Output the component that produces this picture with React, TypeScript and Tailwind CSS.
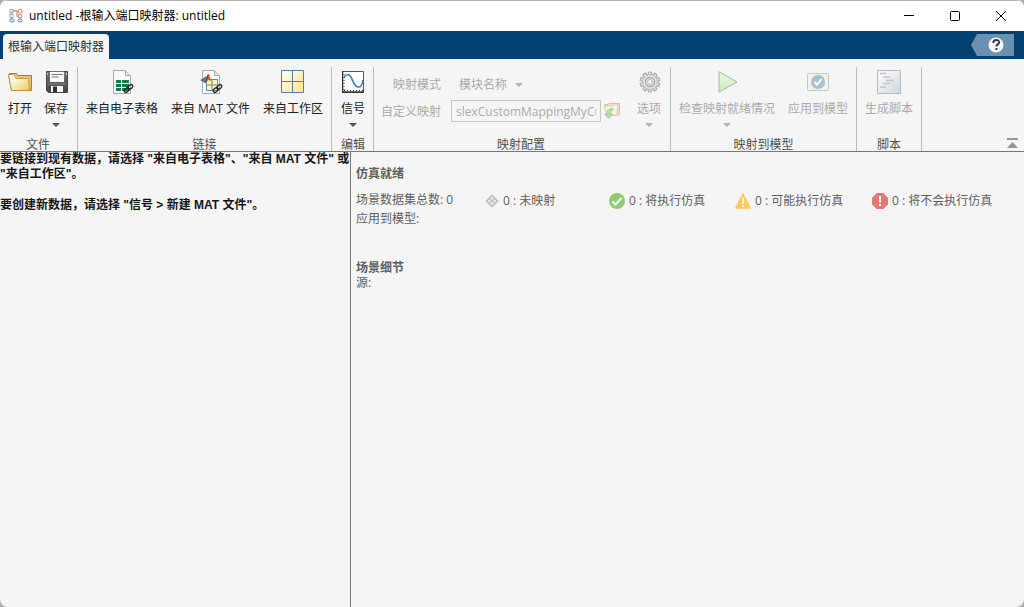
import React from "react";

type Kids = { children?: React.ReactNode };

function Arrow({ className = "" }: { className?: string }) {
  return (
    <svg viewBox="0 0 8 4" className={`h-1 w-2 shrink-0 ${className}`} aria-hidden="true">
      <path d="M0 0h8L4 4z" fill="currentColor" />
    </svg>
  );
}

function Section({ title, className = "", children }: Kids & { title: string; className?: string }) {
  return (
    <section className={`flex shrink-0 flex-col border-r border-[#bcbcbc] ${className}`}>
      <div className="flex flex-1">{children}</div>
      <h2 className="h-[15px] text-center leading-[18px] text-[#505050]">{title}</h2>
    </section>
  );
}

type ToolProps = { label: string; width: string; icon: React.ReactNode; menu?: boolean; disabled?: boolean };

function Tool({ label, width, icon, menu, disabled }: ToolProps) {
  return (
    <button
      type="button"
      disabled={disabled}
      className={`flex shrink-0 flex-col items-center whitespace-nowrap ${width} ${disabled ? "text-[#aaaaaa]" : "text-[#202020]"}`}
    >
      <span className="mt-[3px] flex h-6 items-center justify-center">{icon}</span>
      <span className="mt-[7px] leading-4">{label}</span>
      {menu && <Arrow className={`mt-1.5 ${disabled ? "text-[#b4b4b4]" : "text-[#555555]"}`} />}
    </button>
  );
}

function AppIcon() {
  return (
    <svg viewBox="0 0 14 14" className="h-3.5 w-3.5" fill="none" aria-hidden="true">
      <path d="M4 2h4v5h3v4M2.500 4v6" stroke="#e08a70" strokeWidth="1.300" />
      <g fill="#ffffff" strokeWidth="1">
        <rect x="1" y=".5" width="3" height="3" stroke="#a3a9ae" />
        <rect x="9.500" y=".5" width="3.500" height="3.500" rx="1" stroke="#db7b60" />
        <rect x="1" y="5.500" width="3" height="3" stroke="#a3a9ae" />
        <rect x="9.500" y="5.500" width="3" height="3" stroke="#a3a9ae" />
        <rect x=".7" y="10" width="4.500" height="3" rx="1.500" fill="#c9e1f2" stroke="#5a98c6" />
        <rect x="8.800" y="10" width="4.500" height="3" rx="1.500" fill="#c9e1f2" stroke="#5a98c6" />
      </g>
    </svg>
  );
}

function FolderIcon() {
  return (
    <svg viewBox="0 0 24 24" className="h-6 w-6" aria-hidden="true">
      <defs>
        <linearGradient id="folder" x1="0" y1="0" x2="1" y2="1">
          <stop offset=".2" stopColor="#fffef0" />
          <stop offset="1" stopColor="#eec95e" />
        </linearGradient>
      </defs>
      <path d="M.5 4.500l1-1h7l1.500 2h13.500v15h-20z" fill="#e5c675" stroke="#a57b31" />
      <path d="M.5 4.500h5l2.500 4h12.500l1 12H3.500z" fill="url(#folder)" stroke="#b78b3a" strokeWidth=".8" />
    </svg>
  );
}

function SaveIcon() {
  return (
    <svg viewBox="0 0 22 22" className="ml-0.5 h-[22px] w-[22px]" aria-hidden="true">
      <defs>
        <linearGradient id="disk" x2="0" y2="1">
          <stop stopColor="#777777" />
          <stop offset="1" stopColor="#444444" />
        </linearGradient>
      </defs>
      <path d="M.5.5h21v21h-19l-2-2z" fill="url(#disk)" stroke="#454545" />
      <path d="M4 .8h14V11H4z" fill="#f8f8f8" />
      <path d="M5.500 3.500h11M5.500 6h7" stroke="#777777" />
      <path d="M2.500 13h17" stroke="#858585" />
      <path d="M5 15h12v6H5z" fill="#f5f5f5" />
      <path d="M7 15.500h4V21H7z" fill="#333333" />
      <path d="M1.500 2v2M20.500 2v2" stroke="#cccccc" />
    </svg>
  );
}

function Page() {
  return (
    <>
      <path d="M2.500.5h12l5 5v18h-17z" fill="#f7f9fb" stroke="#a4adb4" />
      <path d="M14.500.5v5h5" fill="#dce2e7" stroke="#a4adb4" />
    </>
  );
}

function Chain() {
  return (
    <g transform="translate(17.500 18.500) rotate(-40)" fill="none" stroke="#272727" strokeWidth="1.400">
      <rect x="-5" y="-1.700" width="5.500" height="3.400" rx="1.700" />
      <rect x="-.5" y="-1.700" width="5.500" height="3.400" rx="1.700" />
    </g>
  );
}

function SheetIcon() {
  return (
    <svg viewBox="0 0 24 24" className="ml-0.5 h-6 w-6" aria-hidden="true">
      <Page />
      <path d="M5 10h13v11H5z" fill="#137c47" />
      <path d="M5 13.500h13M5 17.500h13M10.500 10v11" stroke="#ffffff" />
      <Chain />
    </svg>
  );
}

function MatIcon() {
  return (
    <svg viewBox="0 0 24 24" className="ml-0.5 h-6 w-6" aria-hidden="true">
      <Page />
      <path d="M6.500 9.500h11v11h-11zM6.500 15h11M12 9.500v11" fill="#fff2b2" stroke="#5d8aaf" />
      <path d="M0 10l3-1.500 3-2.500 2 3-3 4-2-1z" fill="#3b83ab" />
      <path d="M5 11l2.500-6.500L9 4l2 7-3-1-2.500 4z" fill="#d65c29" />
      <path d="M8 5l-1.500 5.500-2 1.500" stroke="#873321" fill="none" />
      <Chain />
    </svg>
  );
}

function WorkspaceIcon() {
  return (
    <svg viewBox="0 0 24 24" className="h-6 w-6" aria-hidden="true">
      <defs>
        <linearGradient id="cells" x2="1" y2="1">
          <stop stopColor="#fffef5" />
          <stop offset="1" stopColor="#ffe68c" />
        </linearGradient>
      </defs>
      <path d="M.5.5h22v22H.5z" fill="url(#cells)" />
      <path d="M.5.5h22v22H.5zM.5 11.500h22M11.500.5v22" fill="none" stroke="#537e9d" />
    </svg>
  );
}

function SignalIcon() {
  return (
    <svg viewBox="0 0 22 22" className="h-[22px] w-[22px]" aria-hidden="true">
      <path d="M.5.5h21v21H.5z" fill="#ffffff" stroke="#555555" />
      <path d="M.5 0v22M0 21h22" stroke="#303030" strokeWidth="1.500" />
      <path d="M2 19.500h19" stroke="#303030" strokeDasharray="1 2" />
      <path d="M2 3v17" stroke="#303030" strokeDasharray="1 2" />
      <path d="M1.500 7C4 3 7 2 9.500 7s3 9 7 9c3 0 4-3 4.500-7" fill="none" stroke="#2876bd" strokeWidth="1.500" />
    </svg>
  );
}

function BrowseIcon() {
  return (
    <svg viewBox="0 0 16 16" className="h-4 w-4" aria-hidden="true">
      <path d="M.5 1.500h3.500l1-1h10.500v11.500H3z" fill="#ece0c0" stroke="#d3c3a0" />
      <path d="M.5 3h9l1.500-1.500h3L12.500 12H3.500z" fill="#f8f2e0" stroke="#d8caa8" strokeWidth=".7" />
      <path d="M9 7C7 7 6.500 8.500 6.500 11H9L4.500 15.500.5 11H3c0-4 2-5.500 6-5.500z" fill="#b6dcaf" stroke="#8fc48a" strokeWidth=".7" />
    </svg>
  );
}

function GearIcon() {
  const teeth = [0, 36, 72, 108, 144, 180, 216, 252, 288, 324];
  return (
    <svg viewBox="0 0 22 22" className="ml-0.5 h-[22px] w-[22px]" fill="none" aria-hidden="true">
      {teeth.map((a) => (
        <path key={a} d="M9 4l.5-3h3l.5 3" transform={`rotate(${a} 11 11)`} fill="#dddddd" stroke="#a9a9a9" />
      ))}
      <circle cx="11" cy="11" r="7.500" fill="#e2e2e2" stroke="#bbbbbb" />
      <circle cx="11" cy="11" r="4.500" fill="#eeeeee" stroke="#a9a9a9" strokeWidth="1.500" />
      <circle cx="11" cy="11" r="2.500" fill="#f4f4f4" stroke="#b5b5b5" />
    </svg>
  );
}

function PlayIcon() {
  return (
    <svg viewBox="0 0 20 22" className="ml-0.5 h-[22px] w-5" aria-hidden="true">
      <defs>
        <linearGradient id="play" x2="0" y2="1">
          <stop stopColor="#f0f7e6" />
          <stop offset="1" stopColor="#cde8b7" />
        </linearGradient>
      </defs>
      <path d="M1 .8v20.400L19 11z" fill="url(#play)" stroke="#9bbd9b" strokeLinejoin="round" />
    </svg>
  );
}

function ApplyIcon() {
  return (
    <svg viewBox="0 0 22 18" className="h-[18px] w-[22px]" aria-hidden="true">
      <rect x=".5" y=".5" width="21" height="17" rx="1" fill="#f6f1e0" stroke="#b7c9d5" />
      <circle cx="11" cy="9" r="7" fill="#a9bfce" />
      <path d="M7.500 9l2.500 3 4.500-6" fill="none" stroke="#ffffff" strokeWidth="2" />
    </svg>
  );
}

function ScriptIcon() {
  return (
    <svg viewBox="0 0 24 24" className="h-6 w-6" aria-hidden="true">
      <defs>
        <linearGradient id="script" x2="1" y2="1">
          <stop offset=".2" stopColor="#f5f7f8" />
          <stop offset="1" stopColor="#ccd7df" />
        </linearGradient>
      </defs>
      <path d="M.5.5h23v23H.5z" fill="url(#script)" stroke="#b2bbc1" />
      <path d="M3 3.500h6M6 7h7M9 10.500h8M6 13.500h7M3 17h6" stroke="#c4c4c4" strokeWidth="1.300" />
    </svg>
  );
}

function Diamond() {
  return (
    <svg viewBox="0 0 14 14" className="h-3.5 w-3.5" aria-hidden="true">
      <path d="M7 .8L13.200 7 7 13.200.8 7z" fill="#c6c6c6" stroke="#bababa" strokeLinejoin="round" />
      <path d="M7 2.800l1.600 1.600L7 6 5.400 4.400zM7 8l1.600 1.600L7 11.200 5.400 9.600zM4.400 5.400L6 7 4.400 8.600 2.800 7zM9.600 5.400L11.200 7 9.600 8.600 8 7z" fill="#ededed" />
    </svg>
  );
}

function Check() {
  return (
    <svg viewBox="0 0 16 16" className="h-4 w-4" aria-hidden="true">
      <circle cx="8" cy="8" r="8" fill="#8fcd6f" />
      <path d="M3.500 8.500l3 3 6-6.500" stroke="#ffffff" strokeWidth="2" fill="none" />
    </svg>
  );
}

function Warning() {
  return (
    <svg viewBox="0 0 16 16" className="h-4 w-4" aria-hidden="true">
      <path d="M8 1l7.200 14H.8z" fill="#ffca58" stroke="#ffca58" strokeWidth="1.500" strokeLinejoin="round" />
      <path d="M7 5h2v6H7zM7 12h2v2H7z" fill="#ffffff" />
    </svg>
  );
}

function Stop() {
  return (
    <svg viewBox="0 0 16 16" className="h-4 w-4" aria-hidden="true">
      <path d="M4.700 0h6.600L16 4.700v6.600L11.300 16H4.700L0 11.300V4.700z" fill="#e27a71" />
      <path d="M7 3h2v6.500H7zM7 11h2v2H7z" fill="#ffffff" />
    </svg>
  );
}

function TitleBar() {
  return (
    <header className="flex h-[31px] items-center border-t border-[#b0b0b0] bg-white pr-[7px] pl-[9px]">
      <AppIcon />
      <h1 className="ml-1.5 flex-1 text-black">untitled -根输入端口映射器: untitled</h1>
      <div className="flex gap-[22px] pr-1">
        <button type="button" aria-label="最小化" className="flex h-6 w-6 items-center justify-center">
          <svg viewBox="0 0 10 10" className="h-2.5 w-2.5"><path d="M0 4.500h10" stroke="#000000" /></svg>
        </button>
        <button type="button" aria-label="最大化" className="flex h-6 w-6 items-center justify-center">
          <svg viewBox="0 0 10 10" className="h-2.5 w-2.5"><rect x=".5" y=".5" width="9" height="9" rx="1" fill="none" stroke="#000000" /></svg>
        </button>
        <button type="button" aria-label="关闭" className="flex h-6 w-6 items-center justify-center">
          <svg viewBox="0 0 10 10" className="h-2.5 w-2.5"><path d="M0 0l10 10M10 0L0 10" stroke="#000000" /></svg>
        </button>
      </div>
    </header>
  );
}

function TabBar() {
  return (
    <nav className="flex h-7 items-end justify-between bg-[#004073] pr-2.5 pl-[3px]">
      <button type="button" className="h-[25px] rounded-t-sm bg-[#f5f5f5] px-[5px] text-[#303030]">根输入端口映射器</button>
      <button type="button" aria-label="帮助" className="mb-[3px]">
        <svg viewBox="0 0 43 22" className="h-[22px] w-[43px]" aria-hidden="true">
          <path d="M0 11L6 0h37v22H6z" fill="#6b91b0" />
          <circle cx="25" cy="11" r="7.500" fill="#f6f6f6" />
          <path d="M22.300 9c0-4 5.800-4 5.800-.5 0 2-2.700 1.800-2.700 4M25.400 14v2" fill="none" stroke="#263d56" strokeWidth="1.900" />
        </svg>
      </button>
    </nav>
  );
}

function Toolstrip() {
  return (
    <div className="flex border-b border-[#777777] pt-2">
      <div className="flex h-[84px] flex-1">
        <Section title="文件" className="pr-[9px] pl-2">
          <div className="flex gap-3">
            <Tool label="打开" width="w-6" icon={<FolderIcon />} />
            <Tool label="保存" width="w-6" icon={<SaveIcon />} menu />
          </div>
        </Section>
        <Section title="链接" className="pr-2 pl-2">
          <div className="flex gap-3">
            <Tool label="来自电子表格" width="w-[72px]" icon={<SheetIcon />} />
            <Tool label="来自 MAT 文件" width="w-[81px]" icon={<MatIcon />} />
            <Tool label="来自工作区" width="w-[60px]" icon={<WorkspaceIcon />} />
          </div>
        </Section>
        <Section title="编辑" className="pr-2 pl-[9px]">
          <Tool label="信号" width="w-6" icon={<SignalIcon />} menu />
        </Section>
        <Section title="映射配置" className="pr-[9px] pl-[7px]">
          <div className="flex text-[#aaaaaa]">
            <div className="grid grid-cols-[60px_170px] grid-rows-[22px_22px] content-start items-center gap-x-2.5 gap-y-[5px] pt-1.5">
              <label htmlFor="mode" className="pt-0.5 text-right">映射模式</label>
              <span className="flex items-center pt-0.5 pl-2">
                <select id="mode" disabled className="w-14 appearance-none bg-transparent">
                  <option>模块名称</option>
                </select>
                <Arrow className="text-[#b4b4b4]" />
              </span>
              <label htmlFor="custom" className="pt-0.5 text-right">自定义映射</label>
              <span className="flex items-center gap-[3px]">
                <input
                  id="custom"
                  disabled
                  defaultValue="slexCustomMappingMyCustomMap"
                  className="h-[22px] w-[150px] border border-[#c6c6c6] bg-[#f5f5f5] px-1"
                />
                <button type="button" disabled aria-label="浏览"><BrowseIcon /></button>
              </span>
            </div>
            <div className="ml-4 flex">
              <Tool label="选项" width="w-6" icon={<GearIcon />} menu disabled />
            </div>
          </div>
        </Section>
        <Section title="映射到模型" className="px-2">
          <div className="flex gap-[13px]">
            <Tool label="检查映射就绪情况" width="w-24" icon={<PlayIcon />} menu disabled />
            <Tool label="应用到模型" width="w-[60px]" icon={<ApplyIcon />} disabled />
          </div>
        </Section>
        <Section title="脚本" className="px-2">
          <Tool label="生成脚本" width="w-12" icon={<ScriptIcon />} disabled />
        </Section>
      </div>
      <button type="button" aria-label="折叠工具条" className="mr-1.5 self-end pb-0.5">
        <svg viewBox="0 0 11 11" className="h-[11px] w-[11px]" aria-hidden="true">
          <path d="M0 0h11v2H0zM5.500 4L11 10H0z" fill="#959595" />
        </svg>
      </button>
    </div>
  );
}

function Stat({ icon, text, className }: { icon: React.ReactNode; text: string; className: string }) {
  return (
    <li className={`flex shrink-0 items-center gap-1 whitespace-nowrap ${className}`}>
      {icon}
      <span>0 : {text}</span>
    </li>
  );
}

export default function App() {
  return (
    <div className="min-h-screen bg-[#b0b0b0] font-['Open_Sans','Noto_Sans_CJK_SC',sans-serif] text-xs">
      <div className="flex min-h-screen flex-col overflow-hidden rounded-lg bg-[#f5f5f5]">
        <TitleBar />
        <TabBar />
        <Toolstrip />
        <main className="flex flex-1">
          <aside className="w-[351px] shrink-0 border-r border-[#777777] font-['Liberation_Sans','Noto_Sans_CJK_SC',sans-serif] leading-[15px] font-bold whitespace-nowrap text-[#151515]">
            <p>
              要链接到现有数据，请选择 "来自电子表格"、"来自 MAT 文件" 或<br />
              "来自工作区"。
            </p>
            <p className="mt-4">要创建新数据，请选择 "信号 &gt; 新建 MAT 文件"。</p>
          </aside>
          <div className="flex-1 pt-[13px] pl-[5px] text-[#606060]">
            <section>
              <h2 className="leading-[18px] font-bold">仿真就绪</h2>
              <div className="mt-[7px] flex items-start">
                <div className="w-[129px] shrink-0 leading-[19px]">
                  <p>场景数据集总数: 0</p>
                  <p>应用到模型:</p>
                </div>
                <ul className="flex pt-0.5 leading-[18px]">
                  <Stat icon={<Diamond />} text="未映射" className="w-[124px]" />
                  <Stat icon={<Check />} text="将执行仿真" className="w-[126px]" />
                  <Stat icon={<Warning />} text="可能执行仿真" className="w-[137px]" />
                  <Stat icon={<Stop />} text="将不会执行仿真" className="w-[124px]" />
                </ul>
              </div>
            </section>
            <section className="mt-8 leading-[15px]">
              <h2 className="font-bold">场景细节</h2>
              <p>源:</p>
            </section>
          </div>
        </main>
      </div>
    </div>
  );
}
